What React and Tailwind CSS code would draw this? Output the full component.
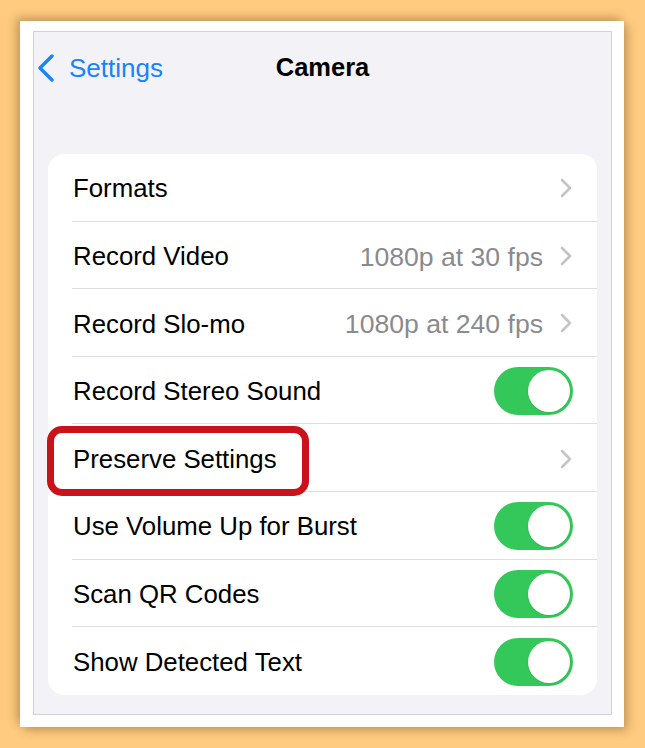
const rows = [
  { label: 'Formats', type: 'link' },
  { label: 'Record Video', type: 'link', value: '1080p at 30 fps' },
  { label: 'Record Slo-mo', type: 'link', value: '1080p at 240 fps' },
  { label: 'Record Stereo Sound', type: 'toggle' },
  { label: 'Preserve Settings', type: 'link', highlight: true },
  { label: 'Use Volume Up for Burst', type: 'toggle' },
  { label: 'Scan QR Codes', type: 'toggle' },
  { label: 'Show Detected Text', type: 'toggle', last: true },
]

function Chevron() {
  return (
    <svg width="12" height="20" viewBox="0 0 12 20" fill="none" className="shrink-0">
      <path d="M2 2l8 8-8 8" stroke="#c4c4c7" strokeWidth="2.6" strokeLinecap="round" strokeLinejoin="round" />
    </svg>
  )
}

function Toggle() {
  return (
    <div className="w-[79px] h-[48px] rounded-full bg-[#34c759] flex items-center justify-end p-[3px] shrink-0">
      <div className="w-[42px] h-[42px] rounded-full bg-white shadow-[0_1px_2px_rgba(0,0,0,0.08)]" />
    </div>
  )
}

function Row({ row }) {
  return (
    <div className="relative h-[67.6px] pl-[24px]">
      <div className={`h-full flex items-center justify-between pl-[1px] pr-[25px] ${row.last ? '' : 'border-b border-[#dedee2]'}`}>
        <span className="text-[25.8px] text-black leading-none pt-[4px]">{row.label}</span>
        {row.type === 'toggle' ? (
          <div className="mr-[-1px] pt-[2px]"><Toggle /></div>
        ) : (
          <div className="flex items-center gap-[17px] pt-[2px]">
            {row.value && <span className="text-[26.6px] text-[#8a8a8e] leading-none pt-[2px]">{row.value}</span>}
            <Chevron />
          </div>
        )}
      </div>
      {row.highlight && (
        <div className="absolute left-[-1px] top-[2px] w-[262px] h-[70px] border-[7px] border-[#cb111a] rounded-[15px]" />
      )}
    </div>
  )
}

export default function App() {
  return (
    <div className="w-[645px] h-[748px] bg-[#ffcb80] pt-[21px] pl-[20px] overflow-hidden" style={{ fontFamily: '"Liberation Sans", Arial, sans-serif' }}>
      <div className="w-[604px] h-[706px] bg-white pt-[10px] pl-[13px] shadow-[-4px_-4px_9px_rgba(90,60,20,0.3),4px_4px_9px_rgba(90,60,20,0.3)]">
        <div className="w-[579px] h-[684px] bg-[#f2f2f7] border border-[#d1d1d6]">
          <div className="h-[71px] grid grid-cols-[1fr_auto_1fr] items-center">
            <div className="flex items-center pl-[3px] gap-[14px]">
              <svg width="18" height="28" viewBox="0 0 18 28" fill="none">
                <path d="M15 2L3 14l12 12" stroke="#1a82fb" strokeWidth="3.4" strokeLinecap="round" strokeLinejoin="round" />
              </svg>
              <span className="text-[26px] text-[#1a82fb] leading-none">Settings</span>
            </div>
            <span className="text-[25.5px] font-bold text-black leading-none">Camera</span>
            <div />
          </div>
          <div className="mt-[51px] mx-[14px] bg-white rounded-[16px]">
            {rows.map(r => <Row key={r.label} row={r} />)}
          </div>
        </div>
      </div>
    </div>
  )
}
